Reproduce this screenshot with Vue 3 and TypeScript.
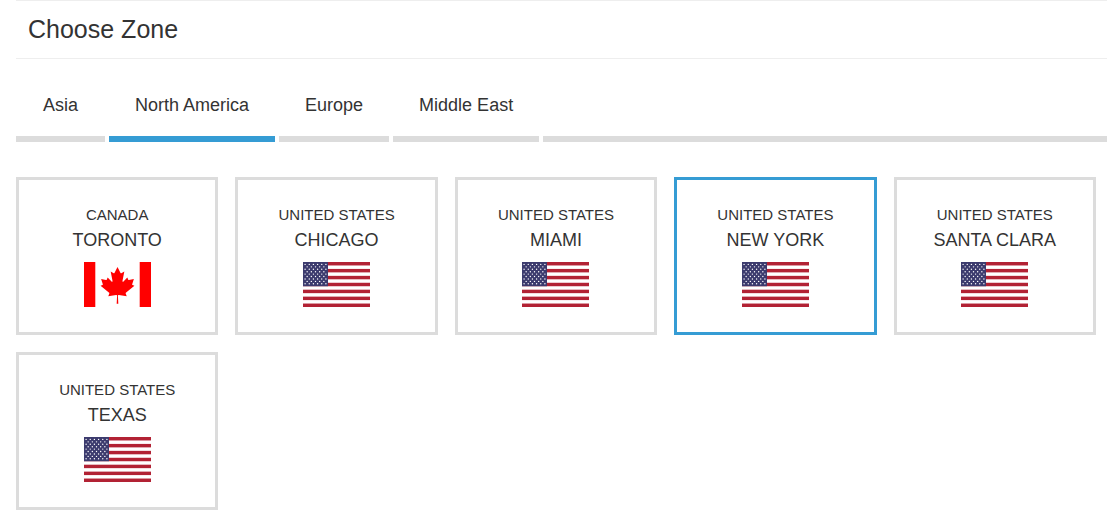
<script setup lang="ts">
import { computed, ref } from 'vue'

interface Zone {
  country: string
  city: string
  flag: 'ca' | 'us'
}

const regions: string[] = ['Asia', 'North America', 'Europe', 'Middle East']
const activeRegion = ref('North America')
const selectedCity = ref('New York')

const zonesByRegion: Record<string, Zone[]> = {
  'North America': [
    { country: 'Canada', city: 'Toronto', flag: 'ca' },
    { country: 'United States', city: 'Chicago', flag: 'us' },
    { country: 'United States', city: 'Miami', flag: 'us' },
    { country: 'United States', city: 'New York', flag: 'us' },
    { country: 'United States', city: 'Santa Clara', flag: 'us' },
    { country: 'United States', city: 'Texas', flag: 'us' },
  ],
}
const zones = computed<Zone[]>(() => zonesByRegion[activeRegion.value] ?? [])

const FLAG_HEIGHT = 45
const CANTON_WIDTH = 25
const stripe = FLAG_HEIGHT / 13
const cantonHeight = stripe * 7

// Nine rows alternating between six and five stars.
const stars: { x: number; y: number }[] = []
for (let row = 0; row < 9; row++) {
  for (let col = row % 2; col < 11; col += 2) {
    stars.push({ x: ((col + 1) * CANTON_WIDTH) / 12, y: ((row + 1) * cantonHeight) / 10 })
  }
}
</script>

<template>
  <main class="page">
    <header class="heading">
      <h2>Choose Zone</h2>
    </header>

    <div class="tabs" role="tablist">
      <button
        v-for="region in regions"
        :key="region"
        type="button"
        role="tab"
        class="tab"
        :class="{ active: region === activeRegion }"
        :aria-selected="region === activeRegion"
        @click="activeRegion = region"
      >
        {{ region }}
      </button>
      <div class="tab-rest"></div>
    </div>

    <div class="zones">
      <button
        v-for="zone in zones"
        :key="zone.city"
        type="button"
        class="zone"
        :class="{ selected: zone.city === selectedCity }"
        :aria-pressed="zone.city === selectedCity"
        @click="selectedCity = zone.city"
      >
        <span class="country">{{ zone.country }}</span>
        <span class="city">{{ zone.city }}</span>
        <svg v-if="zone.flag === 'ca'" class="flag" viewBox="0 0 67 45" aria-hidden="true">
          <rect width="67" height="45" fill="#fff" />
          <rect width="11.3" height="45" fill="#f00" />
          <rect x="55.7" width="11.3" height="45" fill="#f00" />
          <path
            fill="#f00"
            transform="translate(33.5 23.2) scale(0.0091)"
            d="m-90 2030 45-863a95 95 0 0 0-111-98l-859 151 116-320a65 65 0 0 0-20-73l-941-762 212-99a65 65 0 0 0 34-79l-186-572 542 115a65 65 0 0 0 73-38l105-247 423 454a65 65 0 0 0 111-57l-204-1052 327 189a65 65 0 0 0 91-27l332-652 332 652a65 65 0 0 0 91 27l327-189-204 1052a65 65 0 0 0 111 57l423-454 105 247a65 65 0 0 0 73 38l542-115-186 572a65 65 0 0 0 34 79l212 99-941 762a65 65 0 0 0-20 73l116 320-859-151a95 95 0 0 0-111 98l45 863z"
          />
        </svg>
        <svg v-else class="flag" viewBox="0 0 67 45" aria-hidden="true">
          <rect width="67" height="45" fill="#fff" />
          <rect
            v-for="n in 7"
            :key="n"
            :y="(n - 1) * 2 * stripe"
            width="67"
            :height="stripe"
            fill="#b22234"
          />
          <rect :width="CANTON_WIDTH" :height="cantonHeight" fill="#3c3b6e" />
          <circle v-for="(s, i) in stars" :key="i" :cx="s.x" :cy="s.y" r="0.7" fill="#fff" />
        </svg>
      </button>
    </div>
  </main>
</template>

<style>
body {
  margin: 0;
  background: #fff;
}
</style>

<style scoped>
.page {
  padding-left: 16px;
  color: #333;
  font-family: "Liberation Sans", Arial, sans-serif;
}

.heading {
  padding: 0 12px;
  border-top: 1px solid #eee;
  border-bottom: 1px solid #eee;
}

h2 {
  margin: 0;
  font-size: 25px;
  font-weight: 400;
  line-height: 57px;
}

button {
  margin: 0;
  background: none;
  border: 0;
  color: inherit;
  font-family: inherit;
  cursor: pointer;
}

.tabs {
  display: flex;
  gap: 4px;
  margin-top: 34px;
}

.tab {
  min-width: 89px;
  padding: 0 26px 19px;
  border-bottom: 6px solid #dcdcdc;
  font-size: 18px;
  line-height: 24px;
  white-space: nowrap;
}

.tab.active {
  border-bottom-color: #359cd4;
}

.tab-rest {
  flex: 1;
  border-bottom: 6px solid #dcdcdc;
}

.zones {
  display: grid;
  grid-template-columns: repeat(5, 1fr);
  gap: 17px;
  margin: 35px 11px 0 0;
}

.zone {
  display: flex;
  flex-direction: column;
  align-items: center;
  padding: 25px 10px;
  border: 3px solid #dcdcdc;
  text-transform: uppercase;
}

.zone.selected {
  border-color: #359cd4;
}

.country {
  font-size: 15px;
  line-height: 20px;
}

.city {
  font-size: 18px;
  line-height: 30px;
}

.flag {
  display: block;
  width: 67px;
  height: 45px;
  margin-top: 7px;
}
</style>
